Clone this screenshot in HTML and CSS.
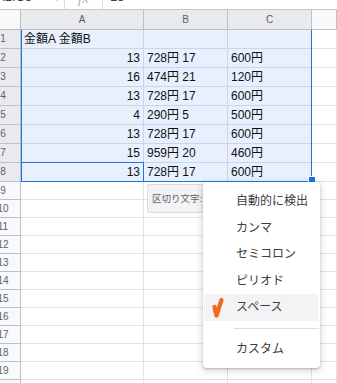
FILE: index.html
```html
<!DOCTYPE html>
<html lang="ja">
<head>
<meta charset="utf-8">
<link rel="stylesheet" href="styles.css">
</head>
<body>
<div class="toolbar">
  <div class="namebox">A1:C8</div>
  <div class="caret">▾</div>
  <div class="vsep"></div>
  <div class="fx">fx</div>
  <div class="vsep"></div>
  <div class="fval">13</div>
</div>
<div class="sheet">
  <div class="row head">
    <div class="cell rh corner"></div>
    <div class="cell ca hsel">A</div>
    <div class="cell cb hsel">B</div>
    <div class="cell cc hsel">C</div>
    <div class="cell cd hd"></div>
  </div>
  <div class="row"><div class="cell rh rsel">1</div><div class="cell ca s tl">金額A 金額B</div><div class="cell cb s"></div><div class="cell cc s"></div><div class="cell cd"></div></div>
  <div class="row"><div class="cell rh rsel">2</div><div class="cell ca s tr">13</div><div class="cell cb s tl">728円 17</div><div class="cell cc s tl">600円</div><div class="cell cd"></div></div>
  <div class="row"><div class="cell rh rsel">3</div><div class="cell ca s tr">16</div><div class="cell cb s tl">474円 21</div><div class="cell cc s tl">120円</div><div class="cell cd"></div></div>
  <div class="row"><div class="cell rh rsel">4</div><div class="cell ca s tr">13</div><div class="cell cb s tl">728円 17</div><div class="cell cc s tl">600円</div><div class="cell cd"></div></div>
  <div class="row"><div class="cell rh rsel">5</div><div class="cell ca s tr">4</div><div class="cell cb s tl">290円 5</div><div class="cell cc s tl">500円</div><div class="cell cd"></div></div>
  <div class="row"><div class="cell rh rsel">6</div><div class="cell ca s tr">13</div><div class="cell cb s tl">728円 17</div><div class="cell cc s tl">600円</div><div class="cell cd"></div></div>
  <div class="row"><div class="cell rh rsel">7</div><div class="cell ca s tr">15</div><div class="cell cb s tl">959円 20</div><div class="cell cc s tl">460円</div><div class="cell cd"></div></div>
  <div class="row"><div class="cell rh rsel">8</div><div class="cell ca s tr">13</div><div class="cell cb s tl">728円 17</div><div class="cell cc s tl">600円</div><div class="cell cd"></div></div>
  <div class="row sm"><div class="cell rh">9</div><div class="cell ca"></div><div class="cell cb"></div><div class="cell cc"></div><div class="cell cd"></div></div>
  <div class="row sm"><div class="cell rh">10</div><div class="cell ca"></div><div class="cell cb"></div><div class="cell cc"></div><div class="cell cd"></div></div>
  <div class="row sm"><div class="cell rh">11</div><div class="cell ca"></div><div class="cell cb"></div><div class="cell cc"></div><div class="cell cd"></div></div>
  <div class="row sm"><div class="cell rh">12</div><div class="cell ca"></div><div class="cell cb"></div><div class="cell cc"></div><div class="cell cd"></div></div>
  <div class="row sm"><div class="cell rh">13</div><div class="cell ca"></div><div class="cell cb"></div><div class="cell cc"></div><div class="cell cd"></div></div>
  <div class="row sm"><div class="cell rh">14</div><div class="cell ca"></div><div class="cell cb"></div><div class="cell cc"></div><div class="cell cd"></div></div>
  <div class="row sm"><div class="cell rh">15</div><div class="cell ca"></div><div class="cell cb"></div><div class="cell cc"></div><div class="cell cd"></div></div>
  <div class="row sm"><div class="cell rh">16</div><div class="cell ca"></div><div class="cell cb"></div><div class="cell cc"></div><div class="cell cd"></div></div>
  <div class="row sm"><div class="cell rh">17</div><div class="cell ca"></div><div class="cell cb"></div><div class="cell cc"></div><div class="cell cd"></div></div>
  <div class="row sm"><div class="cell rh">18</div><div class="cell ca"></div><div class="cell cb"></div><div class="cell cc"></div><div class="cell cd"></div></div>
  <div class="row sm"><div class="cell rh">19</div><div class="cell ca"></div><div class="cell cb"></div><div class="cell cc"></div><div class="cell cd"></div></div>
  <div class="row sm"><div class="cell rh">20</div><div class="cell ca"></div><div class="cell cb"></div><div class="cell cc"></div><div class="cell cd"></div></div>
</div>
<div class="selection"></div>
<div class="active"></div>
<div class="handle"></div>
<div class="splitbtn">区切り文字:</div>
<div class="menu">
  <div class="item">自動的に検出</div>
  <div class="item">カンマ</div>
  <div class="item">セミコロン</div>
  <div class="item">ピリオド</div>
  <div class="item hl">
    <svg class="check" width="16" height="26" viewBox="0 0 16 26"><path d="M5.5 12 L7.5 20.5 L12.5 5" fill="none" stroke="#f26a1f" stroke-width="4.2" stroke-linecap="round" stroke-linejoin="round"/></svg>
    スペース
  </div>
  <div class="sep"></div>
  <div class="item">カスタム</div>
</div>
</body>
</html>
```

FILE: styles.css
```css
html, body {
  margin: 0;
  padding: 0;
}
body {
  width: 337px;
  height: 383px;
  overflow: hidden;
  position: relative;
  background: #fff;
  font-family: "Liberation Sans", "Noto Sans CJK JP", sans-serif;
}
.toolbar {
  height: 9px;
  border-bottom: 1px solid #c7c7c7;
  display: flex;
  overflow: hidden;
  color: #3c4043;
}
.namebox {
  font-size: 13px;
  line-height: 14px;
  margin-top: -10px;
  margin-left: -4px;
  width: 58px;
}
.caret {
  font-size: 10px;
  line-height: 12px;
  margin-top: -8px;
  color: #777;
  width: 10px;
}
.vsep {
  width: 1px;
  background: #dadce0;
  height: 9px;
}
.fx {
  font-family: "Liberation Serif", serif;
  font-style: italic;
  font-size: 15px;
  line-height: 14px;
  margin-top: -9px;
  color: #b5b5b5;
  width: 37px;
  text-align: center;
}
.fval {
  font-size: 13px;
  line-height: 14px;
  margin-top: -10px;
  margin-left: 7px;
}
.sheet {
  margin-left: -14px;
}
.row {
  display: flex;
  height: 19px;
}
.row.head {
  height: 20px;
}
.row.sm {
  height: 18px;
}
.cell {
  box-sizing: border-box;
  height: 100%;
  border-right: 1px solid #e2e2e3;
  border-bottom: 1px solid #e2e2e3;
  font-size: 12px;
  color: #111;
  white-space: nowrap;
  overflow: hidden;
}
.row .cell {
  line-height: 18px;
}
.row.sm .cell {
  line-height: 17px;
}
.rh {
  width: 35px;
  flex: none;
  background: #f8f9fa;
  border-right: 1px solid #c0c0c0;
  border-bottom-color: #c0c0c0;
  color: #5f6368;
  font-size: 10px;
  text-align: center;
}
.rh.rsel {
  background: #e8eaed;
}
.ca { width: 123px; flex: none; }
.cb { width: 84px; flex: none; }
.cc { width: 84px; flex: none; }
.cd { flex: 1; }
.head .cell {
  line-height: 19px;
  font-size: 10px;
  color: #5f6368;
  text-align: center;
  border-right-color: #c0c0c0;
  border-bottom-color: #c0c0c0;
}
.head .hsel {
  background: #e8eaed;
}
.head .hd {
  background: #f8f9fa;
}
.head .corner {
  background: #f8f9fa;
  border-right: 1px solid #bdbdbd;
  border-bottom: 1px solid #bdbdbd;
}
.cell.s {
  background: #e8f0fe;
  border-right-color: #c9d5ea;
  border-bottom-color: #c9d5ea;
}
.tl {
  text-align: left;
  padding-left: 3px;
}
.tr {
  text-align: right;
  padding-right: 3px;
}
.selection {
  position: absolute;
  left: 21px;
  top: 29px;
  width: 291px;
  height: 153px;
  box-sizing: border-box;
  border: 1px solid #1a73e8;
  border-top-color: transparent;
}
.active {
  position: absolute;
  left: 21px;
  top: 162px;
  width: 123px;
  height: 20px;
  box-sizing: border-box;
  border: 1px solid #1a73e8;
}
.handle {
  position: absolute;
  left: 309px;
  top: 177px;
  width: 6px;
  height: 6px;
  background: #1a73e8;
  box-shadow: 0 0 0 1px #fff;
}
.splitbtn {
  position: absolute;
  left: 147px;
  top: 184px;
  width: 70px;
  height: 29px;
  box-sizing: border-box;
  background: #f1f3f4;
  border: 1px solid #dadce0;
  border-radius: 2px;
  font-size: 9.5px;
  line-height: 27px;
  color: #5f6368;
  padding-left: 4px;
}
.menu {
  position: absolute;
  left: 203px;
  top: 182px;
  width: 117px;
  height: 186px;
  box-sizing: border-box;
  padding-top: 6px;
  background: #fff;
  border-radius: 4px;
  box-shadow: 0 1px 2px rgba(60, 64, 67, 0.3), 0 2px 6px 2px rgba(60, 64, 67, 0.15);
}
.item {
  position: relative;
  height: 26.5px;
  line-height: 26.5px;
  padding-left: 33px;
  font-size: 12px;
  color: #3c4043;
}
.item.hl {
  background: #f1f3f4;
  margin-left: 1px;
  margin-right: 2px;
  padding-left: 32px;
}
.check {
  position: absolute;
  left: 5px;
  top: 1px;
}
.sep {
  margin: 7.5px 1px 7px 31px;
  border-top: 1px solid #dadce0;
}
```
